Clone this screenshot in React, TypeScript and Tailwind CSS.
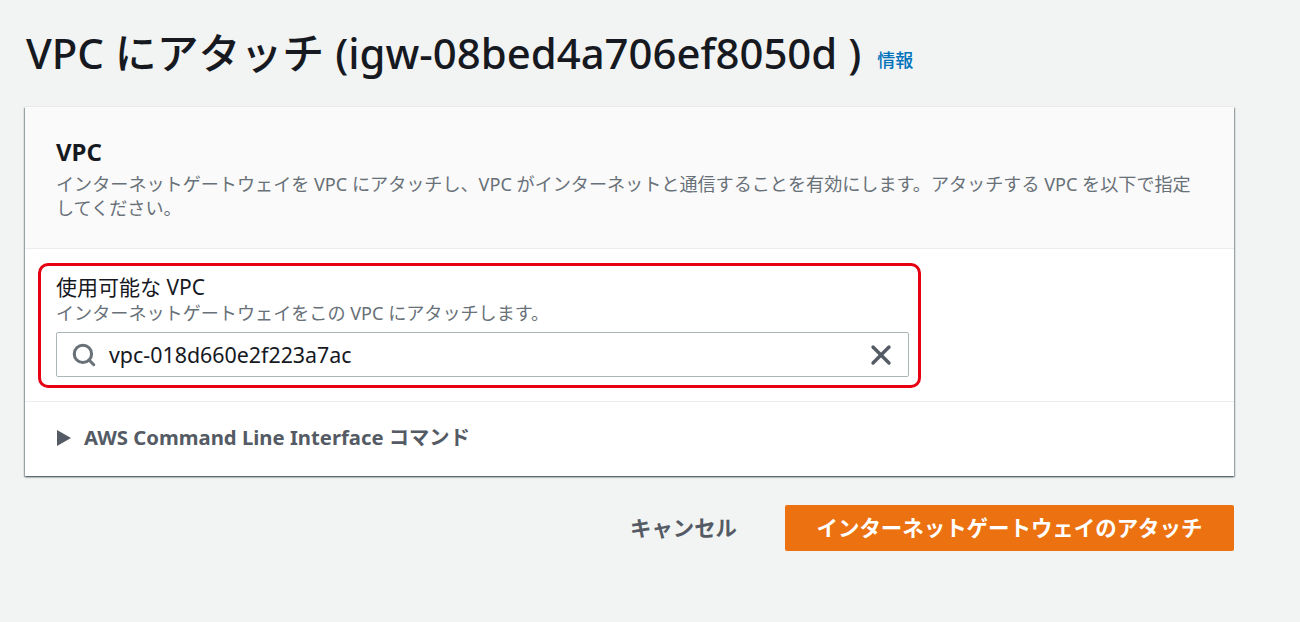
import { Search, X } from 'lucide-react'

const FONT = "font-['Noto_Sans','Noto_Sans_CJK_JP',sans-serif]"

export default function App() {
  return (
    <div className={`h-[622px] w-[1300px] overflow-hidden bg-[#f2f3f3] px-[25px] ${FONT}`}>
      {/* Title */}
      <div className="flex h-[107px] items-center pb-[2px] pl-[1px]">
        <h1 className="whitespace-nowrap text-[41.9px] font-medium leading-[48px] text-[#16191f]">
          VPC にアタッチ (igw-08bed4a706ef8050d )
        </h1>
        <a className="ml-[16px] mt-[16px] text-[18px] font-medium text-[#0073bb]">情報</a>
      </div>

      {/* Card */}
      <div className="w-[1209px] bg-white shadow-[0_1px_2px_rgba(0,28,36,0.5),1px_1px_1px_rgba(0,28,36,0.25),-1px_1px_1px_rgba(0,28,36,0.25)]">
        <div className="h-[142px] border-b border-[#eaeded] bg-[#fafafa] px-[31px] pt-[28px]">
          <h2 className="text-[24px] font-bold leading-[34px] text-[#16191f]">VPC</h2>
          <p className="mt-[3px] text-[18.1px] leading-[24px] text-[#687078]">
            インターネットゲートウェイを VPC にアタッチし、VPC がインターネットと通信することを有効にします。アタッチする VPC を以下で指定してください。
          </p>
        </div>

        <div className="h-[153px] border-b border-[#eaeded] px-[13px] pt-[14px]">
          <div className="h-[125px] w-[883px] rounded-[10px] border-[3px] border-[#e60012] pl-[15px] pr-[9px] pt-[7px]">
            <label className="block text-[21px] leading-[28px] text-[#16191f]">使用可能な VPC</label>
            <p className="text-[18.1px] leading-[24px] text-[#687078]">インターネットゲートウェイをこの VPC にアタッチします。</p>
            <div className="mt-[7px] flex h-[45px] items-center rounded-[2px] border border-[#aab7b8] bg-white pl-[14px] pr-[11px]">
              <Search size={26} strokeWidth={2.8} className="text-[#687078]" />
              <span className="ml-[12px] flex-1 pt-[2px] text-[21.4px] text-[#16191f]">vpc-018d660e2f223a7ac</span>
              <X size={32} strokeWidth={2.5} className="text-[#545b64]" />
            </div>
          </div>
        </div>

        <div className="flex h-[74px] items-center pb-[3px] pl-[32px]">
          <svg width="14" height="16" viewBox="0 0 14 16" className="text-[#545b64]">
            <path d="M0 0 L14 8 L0 16 Z" fill="currentColor" />
          </svg>
          <span className="ml-[13px] text-[20.3px] font-bold text-[#545b64]">AWS Command Line Interface コマンド</span>
        </div>
      </div>

      {/* Actions */}
      <div className="mt-[29px] flex w-[1209px] items-center justify-end">
        <button className="text-[21.4px] font-bold text-[#545b64]">キャンセル</button>
        <button className="ml-[48px] flex h-[46px] w-[449px] items-center justify-center rounded-[2px] bg-[#ec7211] text-[21.45px] font-bold text-white">
          インターネットゲートウェイのアタッチ
        </button>
      </div>
    </div>
  )
}
